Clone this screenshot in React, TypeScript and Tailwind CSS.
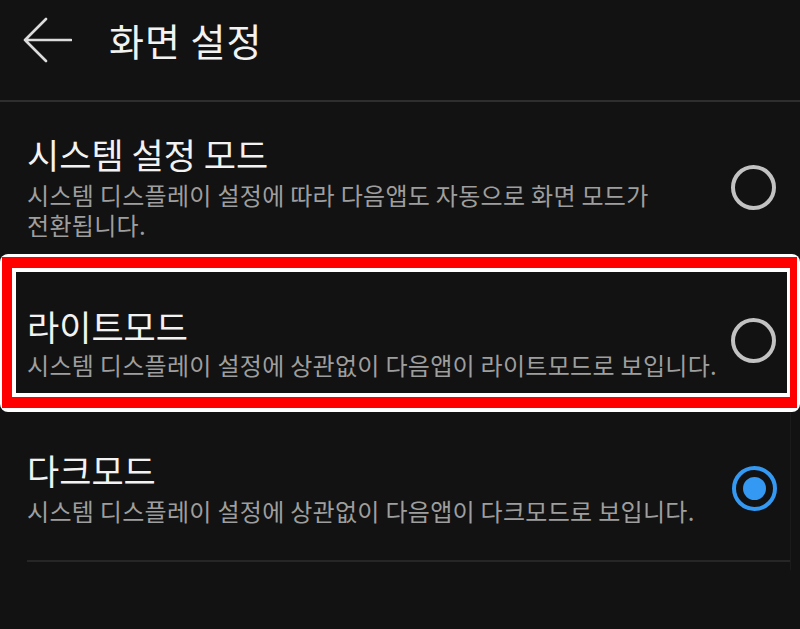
import React from "react";

const font = { fontFamily: '"Noto Sans CJK KR", "Noto Sans", sans-serif' };

function Radio({ checked }: { checked?: boolean }) {
  if (checked) {
    return (
      <div className="w-[45px] h-[45px] rounded-full border-[4px] border-[#3399f3] flex items-center justify-center shrink-0">
        <div className="w-[23px] h-[23px] rounded-full bg-[#3399f3]" />
      </div>
    );
  }
  return <div className="w-[45px] h-[45px] rounded-full border-[4px] border-[#c2c2c2] shrink-0" />;
}

export default function App() {
  return (
    <div className="w-[800px] h-[629px] bg-[#121212] overflow-hidden" style={font}>
      {/* Header */}
      <div className="h-[80px] flex items-center">
        <svg width="50" height="48" viewBox="0 0 50 48" className="ml-[22px] shrink-0">
          <path d="M3 24 H49 M3 24 L24 3 M3 24 L24 45" stroke="#dcdcdc" strokeWidth="2.6" fill="none" strokeLinecap="round" strokeLinejoin="round" />
        </svg>
        <div className="ml-[37px] text-[38px] leading-[40px] text-[#f2f2f2] tracking-[1px]">화면 설정</div>
      </div>
      <div className="h-[20px]" />
      <div className="h-[2px] bg-[#2e2e2e]" />

      {/* Item 1 */}
      <div className="flex items-center justify-between pl-[27px] pr-[24px] pt-[32px] pb-[14px]">
        <div>
          <div className="text-[35px] leading-[40px] text-[#f2f2f2]">시스템 설정 모드</div>
          <div className="mt-[6px] text-[24px] leading-[30px] text-[#9e9e9e] tracking-[0.3px]">
            <div>시스템 디스플레이 설정에 따라 다음앱도 자동으로 화면 모드가</div>
            <div>전환됩니다.</div>
          </div>
        </div>
        <Radio />
      </div>

      {/* Item 2 highlighted */}
      <div className="bg-white rounded-[8px] pt-[3px] pb-[4px] pl-[2px] pr-[3px]">
        <div className="bg-[#ff0000] pt-[11px] pb-[11px] pl-[10px] pr-[7px]">
          <div className="bg-white pt-[4px] pb-[4px] pl-[4px] pr-[3px]">
            <div className="bg-[#121212] h-[121px] flex items-start justify-between pl-[11px] pr-[11px]">
              <div className="pt-[34px]">
                <div className="text-[35px] leading-[40px] text-[#f2f2f2]">라이트모드</div>
                <div className="mt-[4px] text-[24px] leading-[30px] text-[#9e9e9e] tracking-[0.3px]">
                  시스템 디스플레이 설정에 상관없이 다음앱이 라이트모드로 보입니다.
                </div>
              </div>
              <div className="mt-[46px]">
                <Radio />
              </div>
            </div>
          </div>
        </div>
      </div>

      {/* Item 3 */}
      <div className="w-[791px] border-r border-[#1b1b1b]">
        <div className="flex items-center justify-between pl-[27px] pr-[13px] pt-[38px] pb-[34px]">
          <div>
            <div className="text-[35px] leading-[40px] text-[#f2f2f2]">다크모드</div>
            <div className="mt-[6px] text-[24px] leading-[30px] text-[#9e9e9e] tracking-[0.3px]">
              시스템 디스플레이 설정에 상관없이 다음앱이 다크모드로 보입니다.
            </div>
          </div>
          <Radio checked />
        </div>
        <div className="ml-[27px] h-[2px] bg-[#262626]" />
        <div className="h-[8px]" />
      </div>
    </div>
  );
}
